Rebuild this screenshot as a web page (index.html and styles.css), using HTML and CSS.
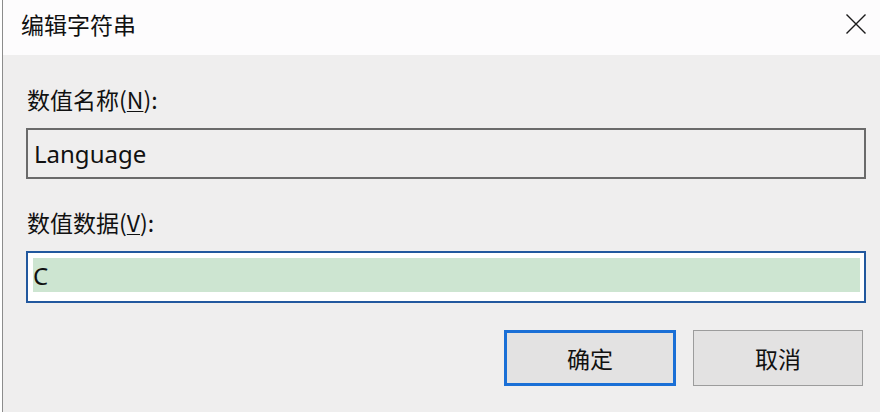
FILE: index.html
```html
<!DOCTYPE html>
<html lang="zh-CN">
<head>
<meta charset="utf-8">
<title>编辑字符串</title>
<link rel="stylesheet" href="styles.css">
</head>
<body>
<div class="window">
  <div class="titlebar">
    <div class="title">编辑字符串</div>
    <svg class="close" width="20" height="20" viewBox="0 0 20 20" aria-label="关闭">
      <path d="M0.5 0.5 L19.5 19.5 M19.5 0.5 L0.5 19.5" stroke="#1a1a1a" stroke-width="1.4" fill="none"/>
    </svg>
  </div>
  <div class="content">
    <div class="label">数值名称(<u>N</u>):</div>
    <div class="field field-readonly"><span class="value">Language</span></div>
    <div class="label label-second">数值数据(<u>V</u>):</div>
    <div class="field field-focus">
      <div class="selection"><span class="value">C</span></div>
    </div>
    <div class="buttons">
      <div class="btn btn-default">确定</div>
      <div class="btn">取消</div>
    </div>
  </div>
</div>
</body>
</html>
```

FILE: styles.css
```css
html, body {
  margin: 0;
  padding: 0;
  background: #ffffff;
}

body {
  font-family: "Noto Sans", "Noto Sans CJK SC", sans-serif;
  color: #111111;
}

.window {
  margin-left: 2px;
  border-left: 1px solid #8c8c8c;
  height: 412px;
  box-sizing: border-box;
  background: #efeeee;
  overflow: hidden;
}

.titlebar {
  height: 55px;
  background: #fdfcfd;
  display: flex;
  justify-content: space-between;
  align-items: flex-start;
  padding: 9px 14px 0 18px;
  box-sizing: border-box;
}

.title {
  font-family: "Noto Sans CJK SC", sans-serif;
  font-size: 23px;
  line-height: 30px;
}

.close {
  display: block;
  margin-top: 5px;
}

.content {
  padding: 29px 14px 0 23px;
}

.label {
  font-family: "Noto Sans CJK SC", sans-serif;
  font-size: 23px;
  line-height: 30px;
  padding-left: 1px;
}

.label u {
  text-decoration-thickness: 1px;
  text-underline-offset: 2px;
}

.label-second {
  margin-top: 28px;
}

.field {
  margin-top: 14px;
  box-sizing: border-box;
  border: 2px solid #6a6a6a;
  display: flex;
  align-items: center;
}

.field-readonly {
  height: 51px;
  background: #efeeee;
  padding-left: 6px;
}

.field-focus {
  height: 52px;
  background: #ffffff;
  border-color: #22589e;
  align-items: flex-start;
  padding: 5px 4px 0 5px;
}

.selection {
  flex: 1;
  height: 34px;
  background: #cde5d1;
  display: flex;
  align-items: center;
  padding-left: 0;
}

.value {
  font-family: "Noto Sans", sans-serif;
  font-size: 24px;
  color: #111111;
}

.buttons {
  margin-top: 27px;
  margin-right: 3px;
  display: flex;
  justify-content: flex-end;
  gap: 17px;
}

.btn {
  width: 170px;
  height: 56px;
  box-sizing: border-box;
  background: #e3e2e2;
  border: 1px solid #9c9c9c;
  display: flex;
  align-items: center;
  justify-content: center;
  font-family: "Noto Sans CJK SC", sans-serif;
  font-size: 23px;
}

.btn-default {
  width: 172px;
  border: 3px solid #1a6fd6;
}
```
